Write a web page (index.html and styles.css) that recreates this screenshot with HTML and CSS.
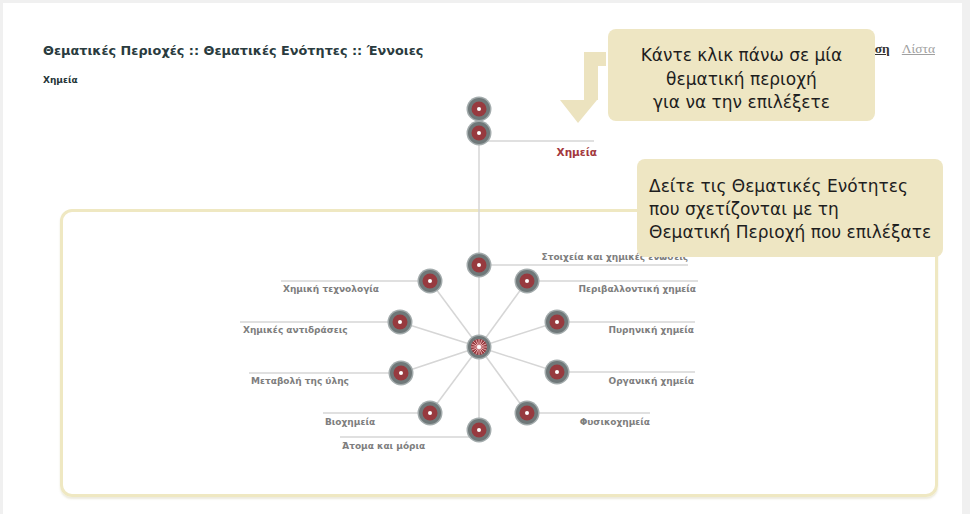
FILE: index.html
```html
<!DOCTYPE html>
<html>
<head>
  <title>Θεματικές Περιοχές</title>
  <meta charset="utf-8">
  <link rel="stylesheet" href="styles.css">
</head>
<body>
  <div class="page">
    <div class="header">
      <h1>Θεματικές Περιοχές :: Θεματικές Ενότητες :: Έννοιες</h1>
      <div class="views">
        <a class="view active" href="#">Απεικόνιση</a>
        <a class="view" href="#">Λίστα</a>
      </div>
    </div>
    <div class="crumb">Χημεία</div>
  </div>

  <div class="stage">
    <div class="frame"></div>

    <svg class="graph" width="970" height="514" viewBox="0 0 970 514">
      <!-- guide lines -->
      <g class="lines">
        <line x1="479" y1="109" x2="479" y2="430"/>
        <line x1="488" y1="141" x2="594" y2="141"/>
        <line x1="479" y1="347" x2="527" y2="281"/>
        <line x1="479" y1="347" x2="557" y2="322"/>
        <line x1="479" y1="347" x2="557" y2="372"/>
        <line x1="479" y1="347" x2="527" y2="413"/>
        <line x1="479" y1="347" x2="430" y2="281"/>
        <line x1="479" y1="347" x2="400" y2="322"/>
        <line x1="479" y1="347" x2="401" y2="373"/>
        <line x1="479" y1="347" x2="430" y2="413"/>
        <line x1="479" y1="265" x2="688" y2="265"/>
        <line x1="527" y1="281" x2="698" y2="281"/>
        <line x1="557" y1="322" x2="695" y2="322"/>
        <line x1="557" y1="372" x2="695" y2="372"/>
        <line x1="527" y1="413" x2="650" y2="413"/>
        <line x1="281" y1="281" x2="430" y2="281"/>
        <line x1="240" y1="322" x2="400" y2="322"/>
        <line x1="249" y1="373" x2="401" y2="373"/>
        <line x1="323" y1="413" x2="430" y2="413"/>
        <line x1="340" y1="437" x2="479" y2="437"/>
      </g>

      <!-- nodes -->
      <g class="node"><circle class="halo" cx="479" cy="109" r="12.5"/><circle class="ring" cx="479" cy="109" r="11"/><circle class="core" cx="479" cy="109" r="7.5"/><circle class="dot" cx="479" cy="109" r="2"/></g>
      <g class="node"><circle class="halo" cx="479" cy="133" r="12.5"/><circle class="ring" cx="479" cy="133" r="11"/><circle class="core" cx="479" cy="133" r="7.5"/><circle class="dot" cx="479" cy="133" r="2"/></g>
      <g class="node"><circle class="halo" cx="479" cy="265" r="12.5"/><circle class="ring" cx="479" cy="265" r="11"/><circle class="core" cx="479" cy="265" r="7.5"/><circle class="dot" cx="479" cy="265" r="2"/></g>
      <g class="node"><circle class="halo" cx="527" cy="281" r="12.5"/><circle class="ring" cx="527" cy="281" r="11"/><circle class="core" cx="527" cy="281" r="7.5"/><circle class="dot" cx="527" cy="281" r="2"/></g>
      <g class="node"><circle class="halo" cx="557" cy="322" r="12.5"/><circle class="ring" cx="557" cy="322" r="11"/><circle class="core" cx="557" cy="322" r="7.5"/><circle class="dot" cx="557" cy="322" r="2"/></g>
      <g class="node"><circle class="halo" cx="557" cy="372" r="12.5"/><circle class="ring" cx="557" cy="372" r="11"/><circle class="core" cx="557" cy="372" r="7.5"/><circle class="dot" cx="557" cy="372" r="2"/></g>
      <g class="node"><circle class="halo" cx="527" cy="413" r="12.5"/><circle class="ring" cx="527" cy="413" r="11"/><circle class="core" cx="527" cy="413" r="7.5"/><circle class="dot" cx="527" cy="413" r="2"/></g>
      <g class="node"><circle class="halo" cx="479" cy="430" r="12.5"/><circle class="ring" cx="479" cy="430" r="11"/><circle class="core" cx="479" cy="430" r="7.5"/><circle class="dot" cx="479" cy="430" r="2"/></g>
      <g class="node"><circle class="halo" cx="430" cy="413" r="12.5"/><circle class="ring" cx="430" cy="413" r="11"/><circle class="core" cx="430" cy="413" r="7.5"/><circle class="dot" cx="430" cy="413" r="2"/></g>
      <g class="node"><circle class="halo" cx="401" cy="373" r="12.5"/><circle class="ring" cx="401" cy="373" r="11"/><circle class="core" cx="401" cy="373" r="7.5"/><circle class="dot" cx="401" cy="373" r="2"/></g>
      <g class="node"><circle class="halo" cx="400" cy="322" r="12.5"/><circle class="ring" cx="400" cy="322" r="11"/><circle class="core" cx="400" cy="322" r="7.5"/><circle class="dot" cx="400" cy="322" r="2"/></g>
      <g class="node"><circle class="halo" cx="430" cy="281" r="12.5"/><circle class="ring" cx="430" cy="281" r="11"/><circle class="core" cx="430" cy="281" r="7.5"/><circle class="dot" cx="430" cy="281" r="2"/></g>

      <!-- hub -->
      <g class="hub">
        <circle class="halo" cx="479" cy="347" r="12.5"/>
        <circle class="ring" cx="479" cy="347" r="11"/>
        <circle class="core" cx="479" cy="347" r="8"/>
        <g class="spokes">
          <line x1="479" y1="339" x2="479" y2="355"/>
          <line x1="471" y1="347" x2="487" y2="347"/>
          <line x1="473.3" y1="341.3" x2="484.7" y2="352.7"/>
          <line x1="484.7" y1="341.3" x2="473.3" y2="352.7"/>
          <line x1="475.9" y1="339.6" x2="482.1" y2="354.4"/>
          <line x1="482.1" y1="339.6" x2="475.9" y2="354.4"/>
          <line x1="471.6" y1="343.9" x2="486.4" y2="350.1"/>
          <line x1="486.4" y1="343.9" x2="471.6" y2="350.1"/>
        </g>
        <circle class="dot" cx="479" cy="347" r="2"/>
      </g>

      <!-- labels -->
      <text class="label sel" x="597" y="156" text-anchor="end">Χημεία</text>
      <text class="label" x="688" y="260" text-anchor="end">Στοιχεία και χημικές ενώσεις</text>
      <text class="label" x="696" y="292" text-anchor="end">Περιβαλλοντική χημεία</text>
      <text class="label" x="694" y="333" text-anchor="end">Πυρηνική χημεία</text>
      <text class="label" x="694" y="384" text-anchor="end">Οργανική χημεία</text>
      <text class="label" x="650" y="425" text-anchor="end">Φυσικοχημεία</text>
      <text class="label" x="283" y="292">Χημική τεχνολογία</text>
      <text class="label" x="243" y="333">Χημικές αντιδράσεις</text>
      <text class="label" x="251" y="384">Μεταβολή της ύλης</text>
      <text class="label" x="325" y="425">Βιοχημεία</text>
      <text class="label" x="342" y="449">Άτομα και μόρια</text>

      <!-- hint arrow -->
      <polygon class="arrow" points="584,52 606,52 606,66 598,66 598,100 597,100 578,123 560,100 584,100"/>
    </svg>

    <div class="hint hint-top">Κάντε κλικ πάνω σε μία<br>θεματική περιοχή<br>για να την επιλέξετε</div>
    <div class="hint hint-side">Δείτε τις Θεματικές Ενότητες<br>που σχετίζονται με τη<br>Θεματική Περιοχή που επιλέξατε</div>
  </div>
</body>
</html>
```

FILE: styles.css
```css
body { margin: 0; background: #f0f0f0; font-family: "DejaVu Sans", Verdana, sans-serif; position: relative; overflow: hidden; }
.page { background: #fff; margin: 3px 8px 0 3px; height: 511px; box-sizing: border-box; padding: 38px 27px 0 40px; }
.header { display: flex; justify-content: space-between; align-items: flex-start; }
.header h1 { margin: 2px 0 0; font-size: 12.8px; font-weight: bold; color: #2a3b3e; }
.views { display: flex; gap: 12px; font-family: "Liberation Serif", serif; font-size: 13.5px; }
.view { color: #a0a0a0; }
.view.active { color: #333; font-weight: bold; }
.crumb { margin-top: 17px; font-size: 9px; font-weight: bold; color: #263538; }

.stage { position: absolute; left: 0; top: 0; width: 970px; height: 514px; }
.frame {
  position: absolute;
  left: 60px;
  top: 209px;
  width: 878px;
  height: 288px;
  box-sizing: border-box;
  border: 3px solid #efe8c2;
  border-radius: 12px;
  box-shadow: 0 2px 2px rgba(180, 170, 120, 0.25);
}
.graph { position: absolute; left: 0; top: 0; }
.lines line { stroke: #d6d6d6; stroke-width: 1.5; }
.halo { fill: #a3abac; }
.ring { fill: #6f7879; }
.core { fill: #973a3f; }
.dot { fill: #fff; }
.spokes line { stroke: #e6a9ab; stroke-width: 1; }
.label { font-family: "DejaVu Sans", Verdana, sans-serif; font-size: 9px; font-weight: bold; fill: #7e7e7e; }
.label.sel { font-size: 10.5px; fill: #a3383d; }
.arrow { fill: #ece3bf; }

.hint {
  position: absolute;
  background: #eee6c3;
  border-radius: 8px;
  color: #1e1e1e;
  font-family: "DejaVu Sans", sans-serif;
  font-size: 17px;
  line-height: 23.5px;
  box-sizing: border-box;
}
.hint-top { left: 608px; top: 29px; width: 267px; height: 92px; padding-top: 15px; text-align: center; }
.hint-side { left: 637px; top: 159px; width: 306px; height: 98px; padding: 16px 0 0 12px; line-height: 23px; }
```
